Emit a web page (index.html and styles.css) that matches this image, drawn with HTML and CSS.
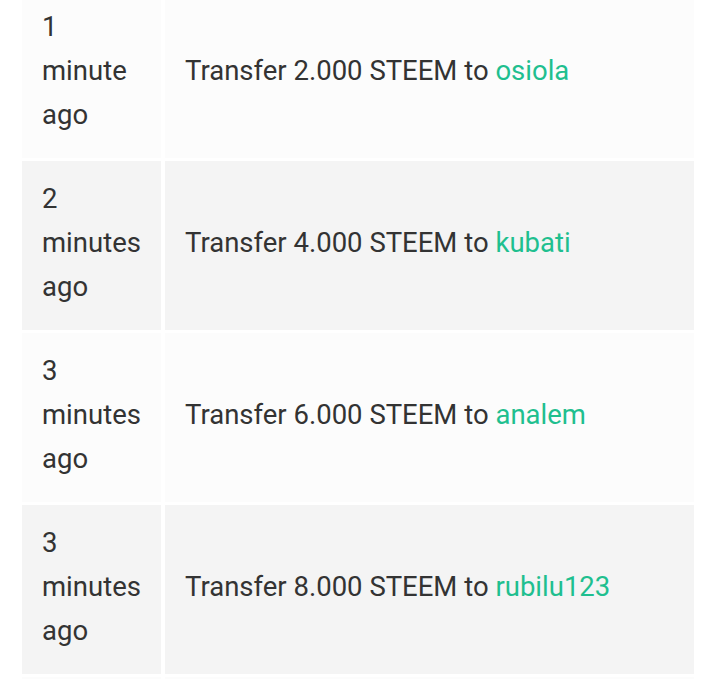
FILE: index.html
```html
<!DOCTYPE html>
<html lang="en">
<head>
    <meta charset="UTF-8">
    <meta name="viewport" content="width=device-width, initial-scale=1.0">
    <title>Transfers</title>
    <link rel="stylesheet" href="styles.css">
</head>
<body>
    <table class="history">
        <tr>
            <td class="time">1 minute ago</td>
            <td class="op">Transfer 2.000 STEEM to <a href="#">osiola</a></td>
        </tr>
        <tr>
            <td class="time">2 minutes ago</td>
            <td class="op">Transfer 4.000 STEEM to <a href="#">kubati</a></td>
        </tr>
        <tr>
            <td class="time">3 minutes ago</td>
            <td class="op">Transfer 6.000 STEEM to <a href="#">analem</a></td>
        </tr>
        <tr>
            <td class="time">3 minutes ago</td>
            <td class="op">Transfer 8.000 STEEM to <a href="#">rubilu123</a></td>
        </tr>
        <tr>
            <td class="time"></td>
            <td class="op"></td>
        </tr>
    </table>
</body>
</html>
```
FILE: styles.css
```css
body {
    margin: 0;
    padding: 0 19px 0 18px;
    background: #fff;
    font-family: Roboto, "Noto Sans", sans-serif;
    color: #333;
    overflow: hidden;
}
.history {
    width: 100%;
    margin-top: -14px;
    border-collapse: separate;
    border-spacing: 4px 3px;
    table-layout: fixed;
    font-size: 27.5px;
    line-height: 44px;
}
.history td {
    padding: 16px 20px 21px;
    vertical-align: middle;
    box-sizing: border-box;
}
.history tr:nth-child(odd) td {
    background: #fcfcfc;
}
.history tr:nth-child(even) td {
    background: #f4f4f4;
}
.time {
    width: 139px;
}
.history a {
    color: #1fbf8f;
    text-decoration: none;
}
```
